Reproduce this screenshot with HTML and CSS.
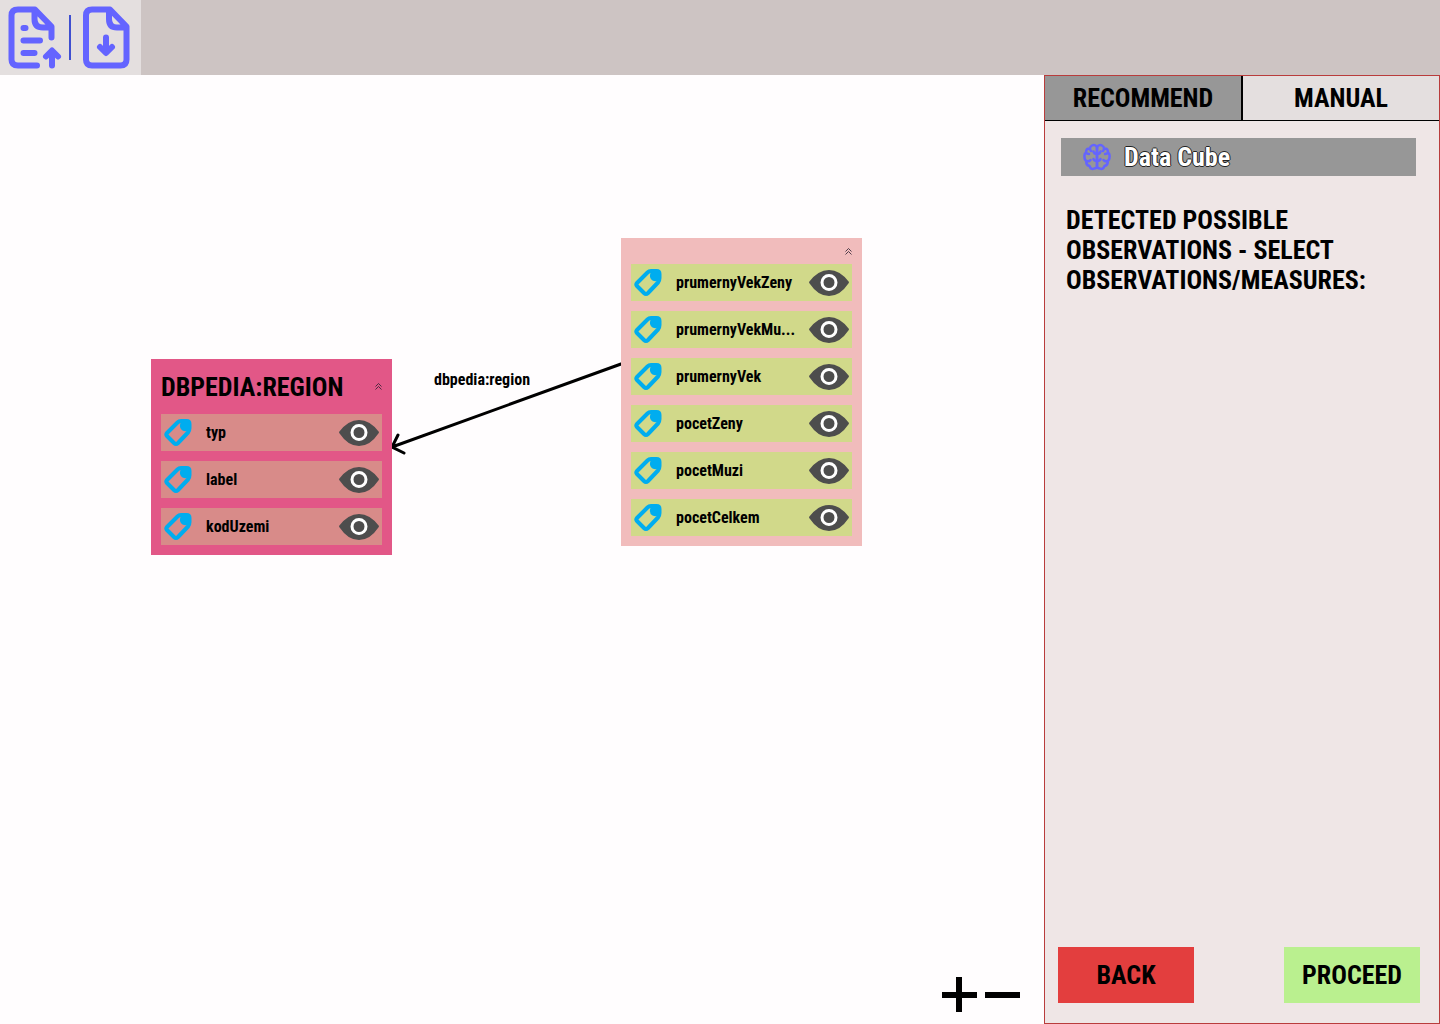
FILE: index.html
```html
<!DOCTYPE html>
<html lang="en">
<head>
<meta charset="utf-8">
<title>Data Cube</title>
<link rel="stylesheet" href="styles.css">
</head>
<body>
<svg class="symbols" aria-hidden="true">
  <symbol id="tag" viewBox="0 0 28 28">
    <path d="M3 14 L13.500 3.500 Q15 2 17 2 H22.500 Q25.500 2 25.500 5 V9 Q25.500 11.500 24 13.500 L14 24 Q12 26 10 24 L3 17 Q1.500 15.500 3 14Z" fill="none" stroke="#00adef" stroke-width="4" stroke-linejoin="round"/>
    <path d="M17.500 3 H25.500 V11 Q22 13 18.500 11.500 Q14.500 9 16.500 4Z" fill="#00adef"/>
  </symbol>
  <symbol id="eye" viewBox="0 0 40 26">
    <path d="M0 12 Q9 0 20 0 T40 12 Q40 13 39 14 Q31 26 20 26 T1 14 Q0 13 0 12Z" fill="#4d4d4d"/>
    <circle cx="20" cy="12.500" r="7" fill="none" stroke="#fff" stroke-width="3"/>
  </symbol>
  <symbol id="fold" viewBox="0 0 7 7">
    <path d="M.5 3.500 3.500 .5 6.500 3.500 M.5 6.500 3.500 3.500 6.500 6.500" fill="none" stroke="#2a2030" stroke-width=".8"/>
  </symbol>
</svg>
<header class="topbar">
  <div class="tools">
    <button class="tool" aria-label="Upload file">
      <svg width="56" height="64" viewBox="0 0 56 64" fill="none" stroke="#6464ff" stroke-width="6" stroke-linecap="round" stroke-linejoin="round">
        <path d="M29 59.500H10Q3.500 59.500 3.500 53.500V9.500Q3.500 3.500 10 3.500H27L43.500 20.500V31.500M26.500 3.500V13Q26.500 21.500 35 21.500H43.500M15.500 22H17.500M15.500 34.500H32M15.500 47H26.500M44 59.500V46M38 50.500 44 44.500 50 50.500"/>
      </svg>
    </button>
    <span class="divider"></span>
    <button class="tool" aria-label="Download file">
      <svg width="48" height="64" viewBox="0 0 48 64" fill="none" stroke="#6464ff" stroke-width="6" stroke-linecap="round" stroke-linejoin="round">
        <path d="M9 3.500H27L43.500 20.500V53.500Q43.500 59.500 37.500 59.500H9Q3 59.500 3 53.500V9.500Q3 3.500 9 3.500ZM26 3.500V13Q26 21.500 34 21.500H43.500M23 31.500V46M17 41 23 47 29 41"/>
      </svg>
    </button>
  </div>
</header>
<div class="workspace">
  <main class="canvas">
    <svg class="edges" fill="none" stroke="#000" stroke-width="3" stroke-linecap="round" aria-hidden="true">
      <path d="M621 289 392 372M398 360 392 372 404 378"/>
    </svg>
    <span class="edge-label">dbpedia:region</span>
    <section class="node region">
      <div class="node-head"><h2>DBPEDIA:REGION</h2><button class="fold" aria-label="Collapse"><svg width="7" height="7"><use href="#fold"/></svg></button></div>
      <ul>
        <li><svg width="28" height="28"><use href="#tag"/></svg><span>typ</span><button aria-label="Hide typ"><svg width="40" height="26"><use href="#eye"/></svg></button></li>
        <li><svg width="28" height="28"><use href="#tag"/></svg><span>label</span><button aria-label="Hide label"><svg width="40" height="26"><use href="#eye"/></svg></button></li>
        <li><svg width="28" height="28"><use href="#tag"/></svg><span>kodUzemi</span><button aria-label="Hide kodUzemi"><svg width="40" height="26"><use href="#eye"/></svg></button></li>
      </ul>
    </section>
    <section class="node observation">
      <div class="node-head"><button class="fold" aria-label="Collapse"><svg width="7" height="7"><use href="#fold"/></svg></button></div>
      <ul>
        <li><svg width="28" height="28"><use href="#tag"/></svg><span>prumernyVekZeny</span><button aria-label="Hide prumernyVekZeny"><svg width="40" height="26"><use href="#eye"/></svg></button></li>
        <li><svg width="28" height="28"><use href="#tag"/></svg><span>prumernyVekMu...</span><button aria-label="Hide prumernyVekMu..."><svg width="40" height="26"><use href="#eye"/></svg></button></li>
        <li><svg width="28" height="28"><use href="#tag"/></svg><span>prumernyVek</span><button aria-label="Hide prumernyVek"><svg width="40" height="26"><use href="#eye"/></svg></button></li>
        <li><svg width="28" height="28"><use href="#tag"/></svg><span>pocetZeny</span><button aria-label="Hide pocetZeny"><svg width="40" height="26"><use href="#eye"/></svg></button></li>
        <li><svg width="28" height="28"><use href="#tag"/></svg><span>pocetMuzi</span><button aria-label="Hide pocetMuzi"><svg width="40" height="26"><use href="#eye"/></svg></button></li>
        <li><svg width="28" height="28"><use href="#tag"/></svg><span>pocetCelkem</span><button aria-label="Hide pocetCelkem"><svg width="40" height="26"><use href="#eye"/></svg></button></li>
      </ul>
    </section>
    <div class="zoom">
      <button aria-label="Zoom in"><svg width="36" height="36" stroke="#000" stroke-width="6"><path d="M1 18H36M18 0V35"/></svg></button>
      <button aria-label="Zoom out"><svg width="36" height="36" stroke="#000" stroke-width="6"><path d="M0 18H35"/></svg></button>
    </div>
  </main>
  <aside class="panel">
    <div class="tabs" role="tablist">
      <button role="tab" aria-selected="true">RECOMMEND</button>
      <button role="tab" aria-selected="false">MANUAL</button>
    </div>
    <div class="source">
      <svg width="28" height="28" viewBox="0 0 28 28" fill="none" stroke="#6464ff" stroke-width="2.500" stroke-linecap="round" stroke-linejoin="round" aria-hidden="true">
        <path id="half" d="M14 4Q12 1 9 2.500 7 3.500 7 5.500 3 5 3 9.500 1 11 1.500 14 1.500 17 3.500 18 2.500 22 6.500 23 8 27 11 25.500 14 25.500 14 23V4M14 11Q11 11 10.500 8.500M14 18Q11 18 10.500 16M3.500 18Q6 19 7.500 17M7 5.500Q7 7 8 8M3 9.500Q4 11 6 11"/>
        <use href="#half" transform="matrix(-1 0 0 1 28 0)"/>
      </svg>
      <span>Data Cube</span>
    </div>
    <h1>DETECTED POSSIBLE OBSERVATIONS - SELECT OBSERVATIONS/MEASURES:</h1>
    <div class="actions">
      <button class="back">BACK</button>
      <button class="proceed">PROCEED</button>
    </div>
  </aside>
</div>
</body>
</html>
```
FILE: styles.css
```css
* { box-sizing: border-box; }
body {
  margin: 0;
  min-height: 100vh;
  display: flex;
  flex-direction: column;
  background: #fffdfe;
  color: #000;
  font-family: "Roboto Condensed", "Open Sans Condensed", Roboto, sans-serif;
  font-weight: 700;
}
button {
  padding: 0;
  border: 0;
  background: none;
  color: inherit;
  font: inherit;
  cursor: pointer;
}
svg { display: block; flex: none; }
h1, h2, ul { margin: 0; padding: 0; }
.symbols { position: absolute; width: 0; height: 0; }

.topbar { display: flex; height: 75px; background: #cdc4c3; }
.tools { display: flex; align-items: center; gap: 5px; padding: 0 10px 0 8px; background: #e4dfdf; }
.divider { width: 2px; height: 45px; margin-right: 7px; background: #3f4fd0; }

.workspace { flex: 1; display: flex; }
.canvas { flex: 1; position: relative; overflow: hidden; }
.edges { position: absolute; width: 100%; height: 100%; }
.edge-label { position: absolute; left: 434px; top: 295px; font-size: 16px; line-height: 20px; }

.node { position: absolute; width: 241px; padding: 0 10px 10px; }
.region { left: 151px; top: 284px; background: #e25787; }
.observation { left: 621px; top: 163px; background: #f1bcbc; }
.node-head { display: flex; align-items: center; height: 55px; }
.observation .node-head { height: 26px; }
.node h2 { font-size: 26px; line-height: 30px; }
.fold { margin-left: auto; }
.node ul { display: grid; gap: 10px; list-style: none; }
.node li { display: flex; align-items: center; height: 37px; padding: 0 3px; background: #d88b89; font-size: 16px; }
.observation li { background: #d1d98a; }
.node li span { flex: 1; margin-left: 14px; }

.zoom { position: absolute; right: 23px; bottom: 11px; display: flex; gap: 8px; }

.panel { width: 396px; display: flex; flex-direction: column; border: 1px solid #b93c3c; background: #efe6e6; }
.tabs { display: flex; height: 45px; border-bottom: 1px solid #000; font-size: 26px; }
.tabs button { flex: 1; background: #e4dfdf; }
.tabs button[aria-selected="true"] { border-right: 2px solid #000; background: #979797; }
.source { display: flex; align-items: center; gap: 13px; height: 38px; margin: 17px 23px 0 16px; padding-left: 22px; background: #979797; color: #fff; font-size: 26px; text-shadow: 1px 0 #222, -1px 0 #222, 0 1px #222, 0 -1px #222; }
.panel h1 { margin: 29px 21px 0; font-size: 26px; line-height: 30px; }
.actions { display: flex; justify-content: space-between; margin: auto 19px 20px 13px; }
.actions button { width: 136px; height: 56px; font-size: 26px; }
.back { background: #e33e3e; }
.proceed { background: #baf08f; }
```
